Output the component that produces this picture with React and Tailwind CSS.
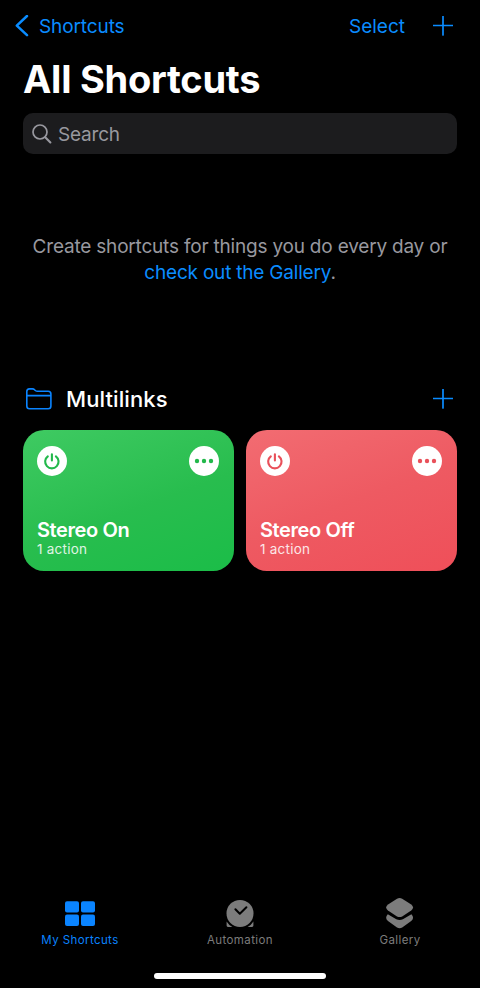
const FONT = "font-['Inter','Liberation_Sans',sans-serif]";

function Plus() {
  return (
    <svg width="20" height="20" viewBox="0 0 20 20" fill="none" stroke="#0a8cff" strokeWidth="1.7" strokeLinecap="round">
      <path d="M0.5 9.5H19.5M10 0.3V18.9" />
    </svg>
  );
}

function Power({ color }) {
  return (
    <svg width="30" height="30" viewBox="0 0 30 30" fill="none" stroke={color} strokeWidth="2.1" strokeLinecap="round">
      <circle cx="15" cy="15" r="15" fill="#fff" stroke="none" />
      <path d="M10.8 10.3A6.7 6.7 0 1 0 18.9 10.3M14.9 8.3V14.4" />
    </svg>
  );
}

function Dots({ color }) {
  return (
    <svg width="30" height="30" viewBox="0 0 30 30" fill={color}>
      <circle cx="15" cy="15" r="15" fill="#fff" />
      <circle cx="8" cy="15" r="2.2" />
      <circle cx="15" cy="15" r="2.2" />
      <circle cx="22" cy="15" r="2.2" />
    </svg>
  );
}

function Card({ title, color, className }) {
  return (
    <div className={`flex h-[141px] w-[211px] flex-col rounded-[21px] pt-[16px] pr-[15px] pl-[14px] text-white ${className}`}>
      <div className="flex h-[30px] justify-between">
        <Power color={color} />
        <Dots color={color} />
      </div>
      <div className="mt-[42px] h-[23px] whitespace-nowrap text-[20px] leading-[24px] font-semibold tracking-[-0.4px]">{title}</div>
      <div className="h-[16px] whitespace-nowrap text-[13.5px] leading-[17px] tracking-[0.25px] opacity-85">1 action</div>
    </div>
  );
}

function Tab({ label, className, children }) {
  return (
    <div className={`flex w-[160px] flex-col items-center ${className}`}>
      <div className="flex h-[32px] items-center">{children}</div>
      <div className="mt-[4px] whitespace-nowrap text-[11.5px] leading-[14px] tracking-[0.4px]">{label}</div>
    </div>
  );
}

export default function App() {
  return (
    <div className={`flex h-[988px] w-[480px] flex-col overflow-hidden bg-black ${FONT}`}>
      <header className="flex h-[51px] items-center pr-[27px] pl-[15px] text-[19px] text-[#0a8cff]">
        <svg width="14" height="22" viewBox="0 0 14 22" fill="none" stroke="currentColor" strokeWidth="2.5" strokeLinecap="round" strokeLinejoin="round">
          <path d="M12 1L1.8 10.6L12 20.2" />
        </svg>
        <span className="mt-[3px] ml-[10px] tracking-[-0.1px]">Shortcuts</span>
        <span className="mt-[3px] mr-[28px] ml-auto">Select</span>
        <Plus />
      </header>

      <h1 className="ml-[23px] h-[62px] whitespace-nowrap text-[38px] leading-[57px] font-bold tracking-[-0.25px] text-white">All Shortcuts</h1>

      <div className="mx-[23px] flex h-[41px] items-center rounded-[10px] bg-[#1c1c1e] pl-[9px] text-[19px] text-[#98989f]">
        <svg width="20" height="20" viewBox="0 0 20 20" fill="none" stroke="currentColor" strokeWidth="1.7" strokeLinecap="round">
          <circle cx="8" cy="8" r="7" />
          <path d="M13.2 13.2L18.4 18.4" strokeWidth="2.1" />
        </svg>
        <span className="mt-[3px] ml-[6px] tracking-[-0.2px]">Search</span>
      </div>

      <div className="mt-[80px] flex h-[52px] flex-col items-center whitespace-nowrap text-[19px] leading-[26px] tracking-[-0.2px] text-[#98989f]">
        <div>Create shortcuts for things you do every day or</div>
        <div><span className="text-[#0a8cff]">check out the Gallery</span>.</div>
      </div>

      <div className="mt-[98px] flex h-[30px] items-center pr-[27px] pl-[26px]">
        <svg width="26" height="22" viewBox="0 0 26 22" fill="none" stroke="#0a84ff" strokeWidth="1.6" strokeLinejoin="round">
          <path d="M0.8 18V3.6Q0.8 0.9 3.5 0.9H6.5Q7.7 0.9 8.6 1.8L9.4 2.5Q10.2 3.2 11.4 3.2H22.2Q24.9 3.2 24.9 5.9V18Q24.9 20.7 22.2 20.7H3.5Q0.8 20.7 0.8 18ZM0.8 7.6H24.9" />
        </svg>
        <span className="ml-[14px] text-[22px] font-medium tracking-[0.1px] text-white">Multilinks</span>
        <div className="ml-auto"><Plus /></div>
      </div>

      <div className="mx-[23px] mt-[16px] flex justify-between">
        <Card title="Stereo On" color="#22b84b" className="bg-linear-[160deg,#3fca62,#28bd4e_55%,#1bbd48]" />
        <Card title="Stereo Off" color="#e9505a" className="bg-linear-[160deg,#f26c72,#ee5a62_50%,#ef4f59]" />
      </div>

      <nav className="mt-auto flex h-[91px]">
        <Tab label="My Shortcuts" className="text-[#0a84ff]">
          <svg width="30" height="32" viewBox="0 0 30 32" fill="currentColor">
            <rect x="0" y="4.2" width="14" height="11.4" rx="2" />
            <rect x="16" y="4.2" width="14" height="11.4" rx="2" />
            <rect x="0" y="17.6" width="14" height="11.4" rx="2" />
            <rect x="16" y="17.6" width="14" height="11.4" rx="2" />
          </svg>
        </Tab>
        <Tab label="Automation" className="text-[#7c7c7c]">
          <svg width="30" height="32" viewBox="0 0 30 32" fill="currentColor">
            <circle cx="15" cy="16.4" r="13.5" />
            <path d="M1.6 24.4Q3.8 28 7.4 30H3Q1.6 30 1.6 28.6ZM28.4 24.4Q26.2 28 22.6 30H27Q28.4 30 28.4 28.6Z" />
            <path d="M10.4 12.2L14.8 16.8L21.4 10.2" fill="none" stroke="#000" strokeWidth="2" strokeLinecap="round" strokeLinejoin="round" />
          </svg>
        </Tab>
        <Tab label="Gallery" className="text-[#7c7c7c]">
          <svg width="28" height="32" viewBox="0 0 28 32" fill="currentColor">
            <path d="M11 1.7Q13.6 0.3 16.2 1.7L25.2 7.4Q28.9 10.4 25.2 13.4L16.2 19.4Q13.6 20.8 11 19.4L2 13.4Q-1.7 10.4 2 7.4Z" />
            <path d="M1.8 17.2L10.3 22.3Q13.6 23.9 16.9 22.3L25.4 17.2Q28.8 21 25.2 24.1L16.2 30.4Q13.6 31.9 11 30.4L2 24.1Q-1.6 21 1.8 17.2Z" />
          </svg>
        </Tab>
      </nav>
      <div className="mx-auto -mt-[15px] mb-[9px] h-[6px] w-[172px] shrink-0 rounded-full bg-white" />
    </div>
  );
}
